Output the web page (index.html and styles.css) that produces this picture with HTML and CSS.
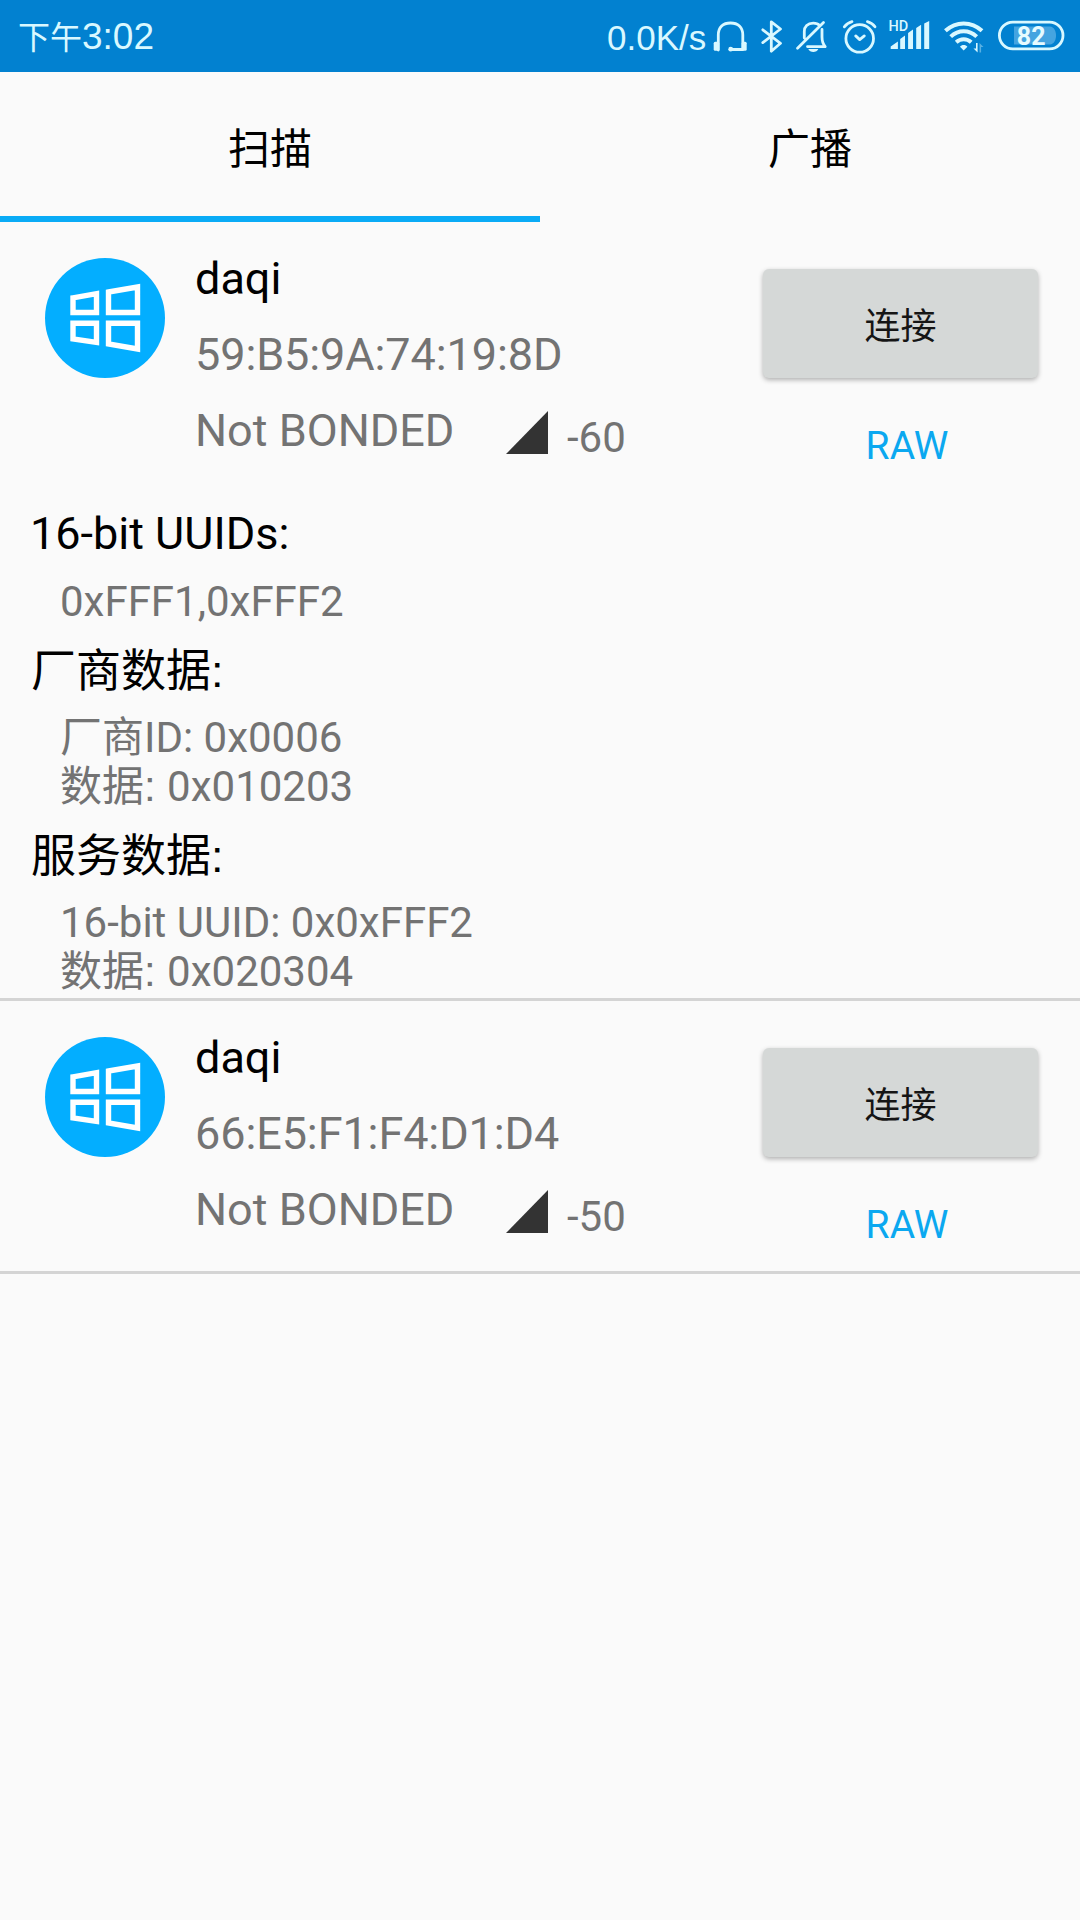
FILE: index.html
```html
<!DOCTYPE html>
<html lang="zh-CN">

<head>
  <meta charset="utf-8">
  <title>BLE</title>
  <link rel="stylesheet" href="styles.css">
</head>

<body>

  <!-- shared icons -->
  <svg class="defs" width="0" height="0">
    <symbol id="windows" viewBox="0 0 120 120">
      <circle cx="60" cy="60" r="60" fill="#03aeff" />
      <g fill="none" stroke="#fff" stroke-width="5.4">
        <path d="M28 39.8 51.5 35.7V54.5H28Z" />
        <path d="M63.5 34 92.5 29V54.5H63.5Z" />
        <path d="M28 65.2H51.5V84.3L28 80.8Z" />
        <path d="M63.5 65.2H92.5V91L63.5 86Z" />
      </g>
    </symbol>
    <symbol id="signal" viewBox="0 0 42 43">
      <path d="M0 43 42 0V43Z" fill="#333" />
    </symbol>
  </svg>

  <div class="statusbar">
    <div class="time"><span class="ampm">下午</span>3:02</div>
    <div class="status-icons">
      <span class="speed">0.0K/s</span>
      <!-- headset -->
      <svg width="40" height="40" viewBox="0 0 40 40">
        <path class="line" d="M8.3 34V19C8.3 11 13 7 20.5 7S32.8 11 32.8 19V33.5H21" />
        <rect class="solid" x="3.7" y="25.7" width="5.6" height="9" rx="1.5" />
        <rect class="solid" x="31.7" y="25.7" width="5" height="9" rx="1.5" />
        <circle class="solid" cx="20.7" cy="33.2" r="2.4" />
      </svg>
      <!-- bluetooth -->
      <svg width="40" height="40" viewBox="0 0 40 40">
        <path class="line" d="M12.8 13.8 30.5 27.3 21.3 35.2V5.8L30.5 13 12.8 26.6" />
      </svg>
      <!-- muted bell -->
      <svg width="50" height="40" viewBox="0 0 50 40">
        <path class="line" d="M14.3 22V15.5C14.3 10.5 17.5 7.2 23.3 7.2 26 7.2 28.2 8 29.7 9.6M32 13.5V21C32 25 33 28 35.2 30.6H17.5M7.5 32.3 33.5 6.5" />
        <path class="solid" d="M18.3 33H28.3C27 37 19.6 37 18.3 33Z" />
      </svg>
      <!-- alarm -->
      <svg width="46" height="40" viewBox="0 0 46 40">
        <circle class="line" cx="19.7" cy="22.4" r="13.8" />
        <path class="line" d="M15.7 19.9 19.7 23.6 24.3 19.9" />
        <path class="line" d="M4.3 10.8C6 8.5 9 6.4 12 5.6M35 10.8C33.4 8.5 30.4 6.4 27.4 5.6" />
      </svg>
      <!-- mobile signal -->
      <svg width="56" height="40" viewBox="0 0 56 40">
        <text class="hd" x="2.4" y="15">HD</text>
        <path class="solid" d="M4.7 33V30.5L11.9 25.5V33ZM14.2 33V23L19 19.5V33ZM22.1 33V17L27 13.5V33ZM30.2 33V12L35.1 8.8V33ZM38.2 33V7.5L43.2 5V33Z" />
      </svg>
      <!-- wifi -->
      <svg width="54" height="40" viewBox="0 0 54 40">
        <path class="wave" d="M3.4 14.8C14 4.9 29.4 4.9 40 14.8M8.7 20.6C16.5 13.4 26.9 13.4 34.7 20.6M14.2 26.2C18.6 22.2 24.8 22.2 29.2 26.2" />
        <path class="solid" d="M21.7 34.6 18 30.8C19.6 28.4 23.8 28.4 25.4 30.8Z" />
        <path class="solid" d="M34 27H35.6V36.5L31.5 32.5H34Z" />
        <path class="solid faint" d="M37.5 36.5V27L41.5 31H39.1V36.5Z" />
      </svg>
      <!-- battery -->
      <svg width="70" height="40" viewBox="0 0 70 40">
        <rect class="line" x="3.4" y="6.1" width="63.6" height="26.8" rx="13.4" />
        <path d="M18 10.5H54C62 11 62 28 54 28.5H18Z" fill="#45a4e0" />
        <text class="level" x="35.2" y="29">82</text>
      </svg>
    </div>
  </div>

  <div class="tabs">
    <div class="tab active">扫描</div>
    <div class="tab">广播</div>
  </div>

  <div class="device">
    <div class="summary">
      <svg class="avatar"><use href="#windows" /></svg>
      <div class="info">
        <div class="name">daqi</div>
        <div class="address">59:B5:9A:74:19:8D</div>
        <div class="state">
          <span class="bond">Not BONDED</span>
          <svg class="signal"><use href="#signal" /></svg>
          <span class="rssi">-60</span>
        </div>
      </div>
      <div class="actions">
        <button class="connect">连接</button>
        <a class="raw">RAW</a>
      </div>
    </div>
    <div class="details">
      <div class="label">16-bit UUIDs:</div>
      <div class="value">0xFFF1,0xFFF2</div>
      <div class="label cn">厂商数据<span class="colon">:</span></div>
      <div class="value">厂商ID: 0x0006<br>数据<span class="colon">:</span> 0x010203</div>
      <div class="label cn">服务数据<span class="colon">:</span></div>
      <div class="value">16-bit UUID: 0x0xFFF2<br>数据<span class="colon">:</span> 0x020304</div>
    </div>
  </div>

  <div class="device">
    <div class="summary">
      <svg class="avatar"><use href="#windows" /></svg>
      <div class="info">
        <div class="name">daqi</div>
        <div class="address">66:E5:F1:F4:D1:D4</div>
        <div class="state">
          <span class="bond">Not BONDED</span>
          <svg class="signal"><use href="#signal" /></svg>
          <span class="rssi">-50</span>
        </div>
      </div>
      <div class="actions">
        <button class="connect">连接</button>
        <a class="raw">RAW</a>
      </div>
    </div>
  </div>

</body>

</html>
```

FILE: styles.css
```css
* { box-sizing: border-box; }
body { margin: 0; min-height: 1920px; background: #fafafa; color: #000; font-family: Roboto, "Noto Sans CJK SC", sans-serif; }
svg { display: block; flex: none; }
.defs { display: none; }

/* status bar */
.statusbar { display: flex; justify-content: space-between; height: 72px; padding: 16px 14px 0 18px; background: #0281d0; color: #d9f8ff; font-family: "Liberation Sans", "Noto Sans CJK SC", sans-serif; }
.time { font-size: 37px; line-height: 42px; white-space: nowrap; }
.ampm { font-size: 32px; }
.status-icons { display: flex; height: 40px; }
.speed { width: 103px; font-size: 35px; line-height: 43px; white-space: nowrap; }
.line { fill: none; stroke: #d9f8ff; stroke-width: 2.8; stroke-linejoin: round; stroke-linecap: round; }
.wave { fill: none; stroke: #d9f8ff; stroke-width: 4; }
.solid { fill: #d9f8ff; }
.faint { opacity: 0.4; }
.hd { fill: #d9f8ff; font: 500 14.5px Roboto, sans-serif; }
.level { fill: #e6fbff; font: bold 25px Roboto, sans-serif; text-anchor: middle; }

/* tabs */
.tabs { display: flex; height: 150px; }
.tab { flex: 1; padding-top: 48px; border-bottom: 6px solid transparent; font-size: 42px; line-height: 60px; text-align: center; }
.tab.active { border-bottom-color: #0aabf6; }

/* device list */
.device { border-bottom: 3px solid #d4d4d4; }
.summary { display: flex; height: 270px; padding: 30px 41px 0 45px; }
.avatar { width: 120px; height: 120px; margin-top: 6px; }
.info { flex: 1; display: flex; flex-direction: column; gap: 23px; margin-left: 30px; font-size: 45px; line-height: 53px; }
.address, .bond, .rssi, .value { color: #737373; }
.address { letter-spacing: -0.1px; }
.state { display: flex; }
.bond { width: 311px; }
.signal { width: 42px; height: 43px; margin-top: 7px; }
.rssi { margin: 9px 0 0 19px; font-size: 42px; line-height: 49px; }
.actions { display: flex; flex-direction: column; align-items: center; width: 277px; padding-top: 17px; }
.connect { width: 275px; height: 109px; padding: 0 0 2px; border: none; border-radius: 6px; background: #d5d8d7; color: #151515; font: 36px "Noto Sans CJK SC", sans-serif; box-shadow: 0 2px 5px rgba(0, 0, 0, 0.3); }
.raw { margin: 45px 0 0 13px; color: #0ba8f0; font-size: 39px; line-height: 46px; }

.details { padding: 15px 30px 2px; }
.label { height: 53px; font-size: 45px; line-height: 53px; }
.label.cn { padding: 1.5px 0 0 1px; }
.value { margin: 17px 0 17px 30px; font-size: 42px; line-height: 49px; }
.value:last-child { margin-bottom: 0; }
.colon { margin-right: 1px; font-family: "Liberation Sans", sans-serif; }
```
